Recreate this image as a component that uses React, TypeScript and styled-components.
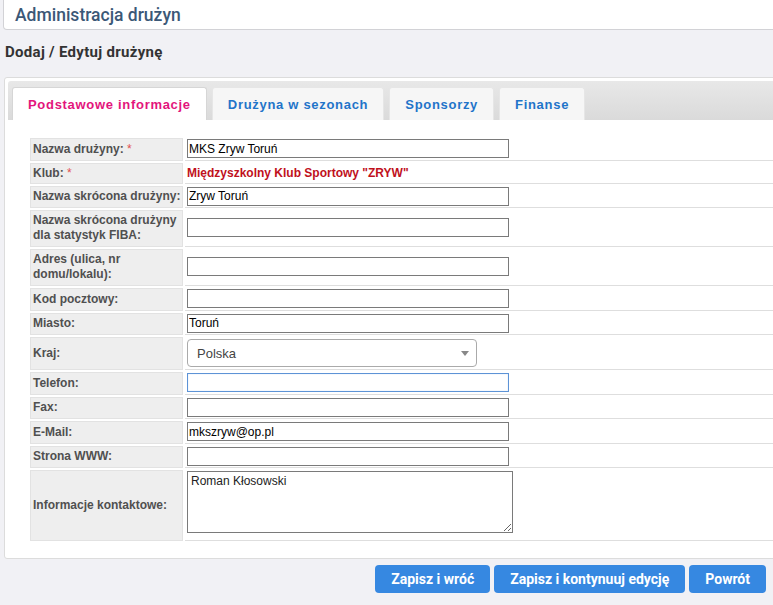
import React from 'react';
import styled, { createGlobalStyle } from 'styled-components';

const GlobalStyle = createGlobalStyle`
  html, body {
    margin: 0;
    padding: 0;
    background: #f1f1f5;
    overflow: hidden;
  }
  body {
    font-family: 'Liberation Sans', Arial, sans-serif;
  }
`;

const Page = styled.div`
  width: 773px;
  min-height: 605px;
`;

const HeaderCard = styled.div`
  height: 30px;
  margin: 0 -30px 0 3px;
  background: #fff;
  border: 1px solid #d2d2d6;
  border-top: none;
  border-radius: 0 0 4px 4px;
  box-sizing: border-box;
  display: flex;
  align-items: center;
  padding-left: 11px;
`;

const HeaderTitle = styled.h1`
  margin: 0;
  font-family: Roboto, 'Liberation Sans', sans-serif;
  font-weight: 500;
  font-size: 17.5px;
  color: #3b5877;
`;

const SectionTitle = styled.h2`
  margin: 13px 0 15px 5px;
  font-family: Roboto, 'Liberation Sans', sans-serif;
  font-weight: 700;
  font-size: 15px;
  letter-spacing: 0.3px;
  line-height: 19px;
  color: #333;
`;

const Panel = styled.div`
  margin: 0 -30px 0 4px;
  background: #fff;
  border: 1px solid #dcdcdc;
  border-radius: 3px;
`;

const TabBar = styled.div`
  margin: 3px 3px 0 3px;
  height: 39px;
  box-sizing: border-box;
  padding: 6px 4px 0 4px;
  display: flex;
  gap: 5px;
  align-items: flex-end;
  background: linear-gradient(#e8e8e8, #dadada);
  border-radius: 3px 3px 0 0;
`;

const Tab = styled.div<{ $active?: boolean }>`
  height: 33px;
  box-sizing: border-box;
  padding: 0 15px;
  display: flex;
  align-items: center;
  font-weight: 700;
  font-size: 13px;
  letter-spacing: 0.7px;
  background: ${({ $active }) => ($active ? '#fff' : '#f6f6f6')};
  color: ${({ $active }) => ($active ? '#e3147c' : '#1f74c9')};
  border: 1px solid ${({ $active }) => ($active ? '#d6d6d6' : '#e6e6e6')};
  border-bottom: none;
  border-radius: 3px 3px 0 0;
`;

const Content = styled.div`
  padding: 16px 0 15px 23px;
`;

const FormTable = styled.table`
  border-collapse: separate;
  border-spacing: 2px;
  width: 100%;
  font-size: 12px;
`;

const Label = styled.td<{ $multi?: boolean }>`
  width: 148px;
  min-width: 148px;
  white-space: nowrap;
  background: #eeeeee;
  border: 1px solid #e2e2e2;
  padding: ${({ $multi }) => ($multi ? '2px 1px 3px 2px' : '2px 1px 2px 2px')};
  line-height: 15px;
  font-weight: 700;
  color: #505050;
  vertical-align: middle;
`;

const Required = styled.span`
  color: #e25050;
  font-weight: 400;
`;

const Value = styled.td<{ $input?: boolean }>`
  border-bottom: 1px solid #dedede;
  padding: ${({ $input }) => ($input ? '1px 0 1.5px 2px' : '1px 0 1px 2px')};
  vertical-align: middle;
`;

const ClubName = styled.span`
  display: inline-block;
  color: #c0101c;
  font-weight: 700;
`;

const TextInput = styled.input<{ $focused?: boolean }>`
  width: 322px;
  height: 19px;
  box-sizing: border-box;
  margin: 0;
  padding: 0 1px;
  border: 1px solid ${({ $focused }) => ($focused ? '#5d93d6' : '#7a7a7a')};
  box-shadow: ${({ $focused }) => ($focused ? 'inset 0 0 1px #9cc0ee' : 'none')};
  font-family: 'Liberation Sans', Arial, sans-serif;
  font-size: 12px;
  color: #000;
  outline: none;
  background: #fff;
  display: block;
`;

const SelectWrap = styled.div`
  position: relative;
  width: 290px;
  margin: 1px 0;
`;

const Select = styled.select`
  width: 100%;
  height: 28px;
  appearance: none;
  border: 1px solid #aaa;
  border-radius: 4px;
  background: #fff;
  padding: 0 0 0 9px;
  font-family: 'Liberation Sans', Arial, sans-serif;
  font-size: 13px;
  color: #444;
  outline: none;
  display: block;
`;

const Arrow = styled.span`
  position: absolute;
  right: 8px;
  top: 12px;
  width: 0;
  height: 0;
  border-left: 4px solid transparent;
  border-right: 4px solid transparent;
  border-top: 5px solid #888;
  pointer-events: none;
`;

const TextArea = styled.textarea`
  width: 326px;
  height: 62px;
  box-sizing: border-box;
  margin: 0 0 6px 0;
  padding: 2px 3px;
  border: 1px solid #7a7a7a;
  font-family: 'Liberation Sans', Arial, sans-serif;
  font-size: 12px;
  color: #222;
  outline: none;
  display: block;
`;

const Footer = styled.div`
  display: flex;
  justify-content: flex-end;
  gap: 4px;
  padding: 6px 7px 0 0;
`;

const Button = styled.button`
  height: 28px;
  padding: 0 16px;
  border: none;
  border-radius: 4px;
  background: #3688e1;
  color: #fff;
  font-family: Roboto, 'Liberation Sans', sans-serif;
  font-weight: 700;
  font-size: 14px;
  cursor: pointer;
`;

type Field = {
  label: React.ReactNode;
  required?: boolean;
  multi?: boolean;
  kind: 'input' | 'text' | 'select' | 'textarea';
  value?: string;
  focused?: boolean;
};

const fields: Field[] = [
  { label: 'Nazwa drużyny:', required: true, kind: 'input', value: 'MKS Zryw Toruń' },
  { label: 'Klub:', required: true, kind: 'text', value: 'Międzyszkolny Klub Sportowy "ZRYW"' },
  { label: 'Nazwa skrócona drużyny:', kind: 'input', value: 'Zryw Toruń' },
  { label: <>Nazwa skrócona drużyny<br />dla statystyk FIBA:</>, multi: true, kind: 'input' },
  { label: <>Adres (ulica, nr<br />domu/lokalu):</>, multi: true, kind: 'input' },
  { label: 'Kod pocztowy:', kind: 'input' },
  { label: 'Miasto:', kind: 'input', value: 'Toruń' },
  { label: 'Kraj:', kind: 'select', value: 'Polska' },
  { label: 'Telefon:', kind: 'input', focused: true },
  { label: 'Fax:', kind: 'input' },
  { label: 'E-Mail:', kind: 'input', value: 'mkszryw@op.pl' },
  { label: 'Strona WWW:', kind: 'input' },
  { label: 'Informacje kontaktowe:', kind: 'textarea', value: 'Roman Kłosowski' },
];

const tabs = ['Podstawowe informacje', 'Drużyna w sezonach', 'Sponsorzy', 'Finanse'];

const renderValue = (f: Field) => {
  switch (f.kind) {
    case 'text':
      return <ClubName>{f.value}</ClubName>;
    case 'select':
      return (
        <SelectWrap>
          <Select defaultValue={f.value}>
            <option>Polska</option>
          </Select>
          <Arrow />
        </SelectWrap>
      );
    case 'textarea':
      return <TextArea defaultValue={f.value} />;
    default:
      return <TextInput defaultValue={f.value ?? ''} $focused={f.focused} />;
  }
};

export default function App() {
  return (
    <>
      <GlobalStyle />
      <Page>
        <HeaderCard>
          <HeaderTitle>Administracja drużyn</HeaderTitle>
        </HeaderCard>
        <SectionTitle>Dodaj / Edytuj drużynę</SectionTitle>
        <Panel>
          <TabBar>
            {tabs.map((t, i) => (
              <Tab key={t} $active={i === 0}>
                {t}
              </Tab>
            ))}
          </TabBar>
          <Content>
            <FormTable>
              <tbody>
                {fields.map((f, i) => (
                  <tr key={i}>
                    <Label $multi={f.multi}>
                      {f.label}
                      {f.required && <Required> *</Required>}
                    </Label>
                    <Value $input={f.kind === 'input'}>{renderValue(f)}</Value>
                  </tr>
                ))}
              </tbody>
            </FormTable>
          </Content>
        </Panel>
        <Footer>
          <Button>Zapisz i wróć</Button>
          <Button>Zapisz i kontynuuj edycję</Button>
          <Button>Powrót</Button>
        </Footer>
      </Page>
    </>
  );
}
